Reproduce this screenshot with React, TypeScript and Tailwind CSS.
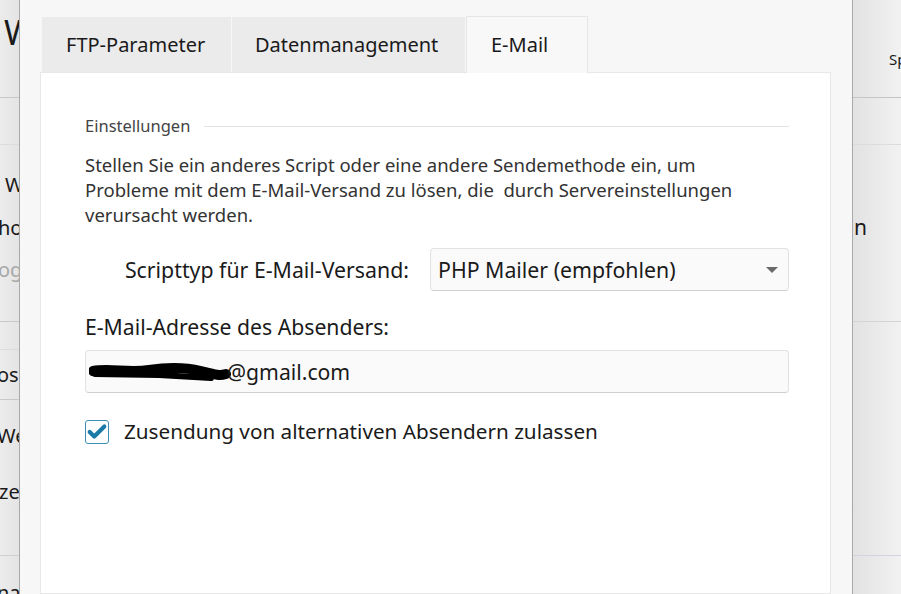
import { Check } from "lucide-react";

const font = { fontFamily: '"Noto Sans", "Open Sans", sans-serif' };

function BackdropLeft() {
  return (
    <div className="relative flex w-[19px] shrink-0 flex-col overflow-hidden bg-gradient-to-r from-[#ececec] to-[#e4e4e4] text-[#1a1a1a]">
      <div className="h-[98px] shrink-0 border-b border-[#c8c8c8] pl-[4px] pt-[12px] text-[34px] leading-[40px] whitespace-nowrap">
        Web
      </div>
      <div className="h-[47px] shrink-0 border-b border-[#dcdcdc]" />
      <div className="flex h-[176px] shrink-0 flex-col pt-[26px] text-[20px] leading-[28px] whitespace-nowrap">
        <div className="pl-[5px]">Web</div>
        <div className="mt-[15px] -ml-[2px]">ho</div>
        <div className="mt-[14px] -ml-[2px] text-[#a8a8a8]">og</div>
      </div>
      <div className="h-[28px] shrink-0 border-t border-[#c8c8c8]" />
      <div className="flex h-[50px] shrink-0 items-center border-t border-[#dcdcdc] -ml-[3px] text-[20px] whitespace-nowrap">
        ost
      </div>
      <div className="flex h-[156px] shrink-0 flex-col border-t border-[#c8c8c8] pt-[22px] text-[20px] leading-[28px] whitespace-nowrap">
        <div className="-ml-[3px]">We</div>
        <div className="mt-[28px] -ml-[1px]">zei</div>
      </div>
      <div className="shrink-0 border-t border-[#d0d0d0] pt-[22px] -ml-[3px] text-[20px] whitespace-nowrap">na</div>
    </div>
  );
}

function BackdropRight() {
  return (
    <div className="flex w-[49px] shrink-0 flex-col overflow-hidden bg-gradient-to-r from-[#e2e2e2] to-[#f2f2f2] text-[#1a1a1a]">
      <div className="h-[98px] shrink-0 border-b border-[#c5c5c5] pl-[36px] pt-[48px] text-[15px] leading-[22px] whitespace-nowrap">
        Sp
      </div>
      <div className="h-[47px] shrink-0 border-b border-[#dcdcdc]" />
      <div className="h-[177px] shrink-0 border-b border-[#d4d4d4] pt-[68px] text-[21px] leading-[28px] whitespace-nowrap">
        <div className="pl-px">n</div>
      </div>
      <div className="h-[234px] shrink-0 border-b border-[#d4d4dc]" />
    </div>
  );
}

function Scribble() {
  return (
    <svg width="142" height="22" viewBox="0 0 142 22" className="shrink-0">
      <path
        d="M4 10 C 20 7, 40 12, 60 9 S 95 6, 112 10 S 130 15, 137 13"
        stroke="#000"
        strokeWidth="10"
        strokeLinecap="round"
        fill="none"
      />
      <path d="M6 13 L 70 14 L 122 17" stroke="#000" strokeWidth="6" strokeLinecap="round" fill="none" />
    </svg>
  );
}

export default function App() {
  return (
    <div className="flex h-[594px] w-[901px] overflow-hidden bg-[#ececec]" style={font}>
      <BackdropLeft />
      <div className="flex w-[834px] shrink-0 flex-col border-x border-[#a9a9a9] bg-[#f7f7f7] pl-[20px] pr-[21px] shadow-[0_0_6px_rgba(0,0,0,0.25)]">
        {/* tabs */}
        <div className="flex h-[72px] items-end pl-[2px] text-[20px] text-[#1a1a1a]">
          <div className="flex h-[55px] w-[189px] items-center bg-[#ebebeb] pl-[24px]">FTP-Parameter</div>
          <div className="ml-[1px] flex h-[55px] w-[233px] items-center bg-[#ebebeb] pl-[23px]">Datenmanagement</div>
          <div className="relative -mb-px ml-[1px] flex h-[57px] w-[122px] items-center border-x border-t border-[#e6e6e6] bg-[#f8f8f8] pl-[24px]">
            E-Mail
          </div>
        </div>
        {/* panel */}
        <div className="flex flex-1 flex-col border border-[#e8e8e8] bg-white pl-[44px] pr-[41px] text-[#1a1a1a]">
          <div className="mt-[42px] flex items-center gap-[14px]">
            <span className="text-[16.5px] leading-[22px] text-[#444]">Einstellungen</span>
            <div className="h-px flex-1 bg-[#e3e3e3]" />
          </div>
          <p className="mt-[15px] text-[18.5px] leading-[25px] text-[#333]">
            Stellen Sie ein anderes Script oder eine andere Sendemethode ein, um
            <br />
            Probleme mit dem E-Mail-Versand zu lösen, die&nbsp; durch Servereinstellungen
            <br />
            verursacht werden.
          </p>
          <div className="mt-[21px] flex items-center">
            <label className="w-[345px] shrink-0 whitespace-nowrap pr-[21px] text-right text-[21.3px]">Scripttyp für E-Mail-Versand:</label>
            <div className="flex h-[43px] flex-1 items-center justify-between rounded-[4px] border border-[#e2e2e2] border-b-[#cfcfcf] bg-[#fafafa] pl-[7px] pr-[10px] text-[21.3px]">
              <span>PHP Mailer (empfohlen)</span>
              <svg width="12" height="6" viewBox="0 0 12 6">
                <path d="M0 0 L12 0 L6 6 Z" fill="#6b6b6b" />
              </svg>
            </div>
          </div>
          <div className="mt-[20px] text-[21.2px] leading-[32px]">E-Mail-Adresse des Absenders:</div>
          <div className="mt-[7px] flex h-[43px] shrink-0 items-center rounded-[4px] border border-[#e2e2e2] border-b-[#cfcfcf] bg-[#fafafa] pl-[3px] text-[21.2px]">
            <Scribble />
            <span className="-ml-[4px]">@gmail.com</span>
          </div>
          <div className="mt-[23px] flex items-center gap-[15px]">
            <div className="flex h-[24px] w-[24px] shrink-0 items-center justify-center rounded-[3px] border-[1.5px] border-[#3d8fb5] bg-white">
              <Check className="h-[22px] w-[22px] text-[#1a7ba8]" strokeWidth={4.5} />
            </div>
            <span className="text-[20.7px]">Zusendung von alternativen Absendern zulassen</span>
          </div>
        </div>
      </div>
      <BackdropRight />
    </div>
  );
}
